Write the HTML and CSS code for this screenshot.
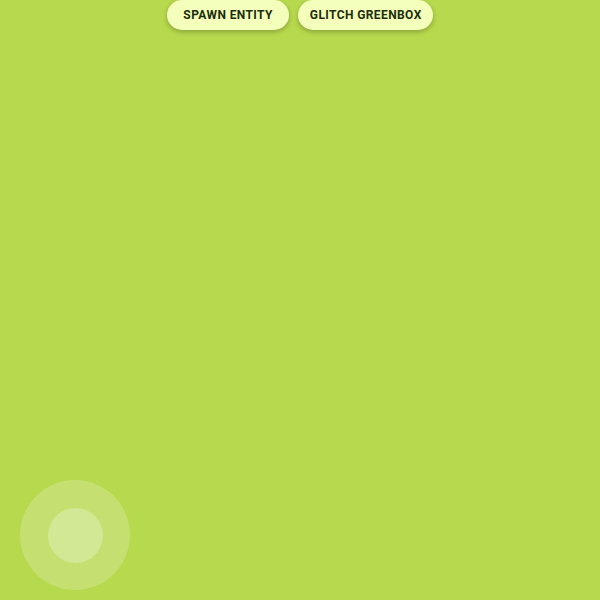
FILE: index.html
```html
<!DOCTYPE html>
<html>
<head>
<meta charset="utf-8">
<link rel="stylesheet" href="styles.css">
</head>
<body>
<div class="stage">
  <div class="toolbar">
    <button class="pill pill-spawn">SPAWN ENTITY</button>
    <button class="pill pill-glitch">GLITCH GREENBOX</button>
  </div>
  <div class="joystick"><div class="knob"></div></div>
</div>
</body>
</html>
```
FILE: styles.css
```css
html, body {
  margin: 0;
  padding: 0;
  width: 600px;
  height: 600px;
  overflow: hidden;
  background: #b7d94d;
}
.stage {
  position: relative;
  width: 600px;
  height: 600px;
}
.toolbar {
  display: flex;
  justify-content: center;
  gap: 9px;
  padding-top: 0;
}
.pill {
  height: 30px;
  border: none;
  border-radius: 15px;
  background: #f4ffbb;
  color: #1c2d0d;
  font-family: Roboto, "Liberation Sans", sans-serif;
  font-weight: 700;
  font-size: 12px;
  letter-spacing: 0.4px;
  box-shadow: 0 2px 5px rgba(0, 0, 0, 0.25);
}
.pill-spawn {
  padding: 0 16px;
}
.pill-glitch {
  padding: 0 11px 0 12px;
}
.joystick {
  position: absolute;
  left: 20px;
  top: 480px;
  width: 110px;
  height: 110px;
  border-radius: 50%;
  background: rgba(255, 255, 255, 0.2);
  display: flex;
  align-items: center;
  justify-content: center;
}
.knob {
  width: 55px;
  height: 55px;
  border-radius: 50%;
  background: rgba(255, 255, 255, 0.25);
}
```
